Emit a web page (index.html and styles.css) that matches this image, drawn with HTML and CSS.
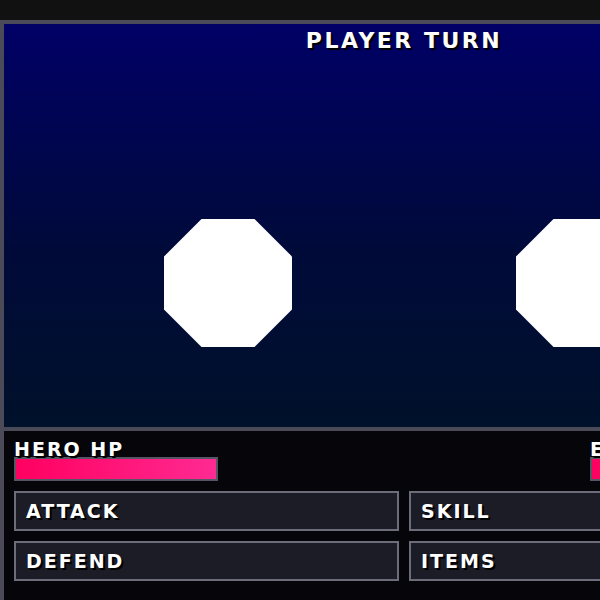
FILE: index.html
```html
<!DOCTYPE html>
<html>
<head>
<meta charset="utf-8">
<link rel="stylesheet" href="styles.css">
</head>
<body>
<div class="game">
  <div class="stage">
    <div class="turn">PLAYER TURN</div>
    <div class="fighters">
      <div class="octagon"></div>
      <div class="octagon"></div>
    </div>
  </div>
  <div class="panel">
    <div class="hp-row">
      <div class="hp">
        <div class="hp-label">HERO HP</div>
        <div class="hp-bar"><div class="hp-fill"></div></div>
      </div>
      <div class="hp">
        <div class="hp-label">ENEMY HP</div>
        <div class="hp-bar"><div class="hp-fill"></div></div>
      </div>
    </div>
    <div class="actions">
      <div class="btn">ATTACK</div>
      <div class="btn">SKILL</div>
      <div class="btn">DEFEND</div>
      <div class="btn">ITEMS</div>
    </div>
  </div>
</div>
</body>
</html>
```
FILE: styles.css
```css
html, body {
  margin: 0;
  padding: 0;
  background: #111111;
  overflow: hidden;
}
body {
  font-family: "DejaVu Sans", "Liberation Sans", sans-serif;
  font-weight: bold;
  color: #ffffff;
}
.game {
  margin-top: 20px;
  width: 800px;
  border: 4px solid #4a4a58;
  background: #05050a;
}
.stage {
  height: 403px;
  background: linear-gradient(180deg, #000066 0%, #000a3a 55%, #00112a 100%);
  display: flex;
  flex-direction: column;
  justify-content: space-between;
  border-bottom: 4px solid #4a4a58;
}
.turn {
  padding-top: 6px;
  font-size: 22px;
  line-height: 22px;
  letter-spacing: 2.5px;
  text-align: center;
  text-shadow: 2px 2px 0 #000000;
}
.fighters {
  display: flex;
  justify-content: center;
  gap: 224px;
  padding-bottom: 80px;
}
.octagon {
  width: 128px;
  height: 128px;
  background: #ffffff;
  clip-path: polygon(29.3% 0, 70.7% 0, 100% 29.3%, 100% 70.7%, 70.7% 100%, 29.3% 100%, 0 70.7%, 0 29.3%);
}
.panel {
  padding: 10px;
  height: 200px;
}
.hp-row {
  display: flex;
  justify-content: space-between;
}
.hp {
  width: 204px;
}
.hp-label {
  font-size: 19px;
  line-height: 16px;
  letter-spacing: 2px;
  text-shadow: 2px 2px 0 #000000;
  white-space: nowrap;
}
.hp-bar {
  height: 20px;
  border: 2px solid #555566;
  background: #222;
}
.hp-fill {
  height: 100%;
  background: linear-gradient(90deg, #ff0060 0%, #ff2a92 100%);
}
.actions {
  margin-top: 10px;
  display: grid;
  grid-template-columns: 1fr 1fr;
  gap: 10px;
}
.btn {
  height: 36px;
  border: 2px solid #6c6c7a;
  background: #1c1c26;
  display: flex;
  align-items: center;
  padding-left: 10px;
  font-size: 19px;
  letter-spacing: 2px;
  text-shadow: 2px 2px 0 #000000;
}
```
